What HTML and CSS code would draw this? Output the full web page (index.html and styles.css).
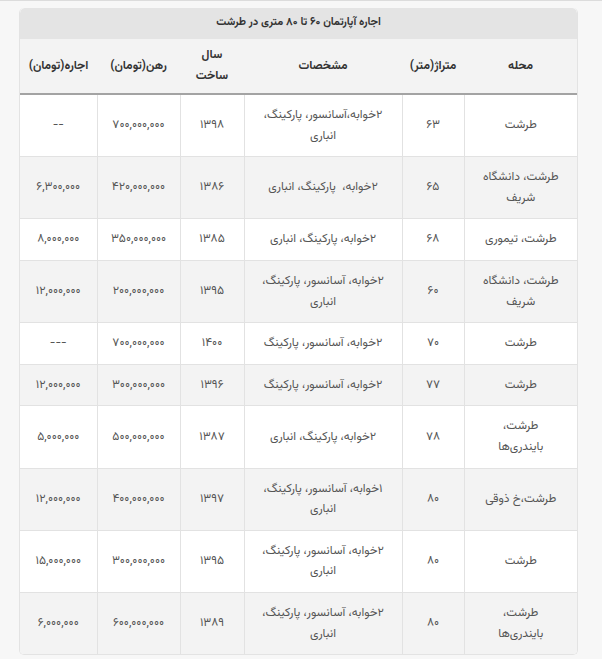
FILE: index.html
```html
<!DOCTYPE html>
<html lang="fa" dir="rtl">
<head>
<meta charset="utf-8">
<title>اجاره آپارتمان</title>
<link rel="stylesheet" href="styles.css">
</head>
<body>
<div class="page">
  <div class="card">
    <div class="caption">اجاره آپارتمان ۶۰ تا ۸۰ متری در طرشت</div>
    <table class="rent">
      <colgroup>
        <col class="c-area">
        <col class="c-size">
        <col class="c-spec">
        <col class="c-year">
        <col class="c-mortgage">
        <col class="c-rent">
      </colgroup>
      <thead>
        <tr>
          <th>محله</th>
          <th>متراژ(متر)</th>
          <th>مشخصات</th>
          <th>سال<br>ساخت</th>
          <th>رهن(تومان)</th>
          <th>اجاره(تومان)</th>
        </tr>
      </thead>
      <tbody>
        <tr>
          <td>طرشت</td><td>۶۳</td><td>۲خوابه،آسانسور، پارکینگ،<br>انباری</td><td>۱۳۹۸</td><td>۷۰۰,۰۰۰,۰۰۰</td><td>--</td>
        </tr>
        <tr>
          <td>طرشت، دانشگاه<br>شریف</td><td>۶۵</td><td>۲خوابه،&nbsp; پارکینگ، انباری</td><td>۱۳۸۶</td><td>۴۲۰,۰۰۰,۰۰۰</td><td>۶,۳۰۰,۰۰۰</td>
        </tr>
        <tr>
          <td>طرشت، تیموری</td><td>۶۸</td><td>۲خوابه، پارکینگ، انباری</td><td>۱۳۸۵</td><td>۳۵۰,۰۰۰,۰۰۰</td><td>۸,۰۰۰,۰۰۰</td>
        </tr>
        <tr>
          <td>طرشت، دانشگاه<br>شریف</td><td>۶۰</td><td>۲خوابه، آسانسور، پارکینگ،<br>انباری</td><td>۱۳۹۵</td><td>۲۰۰,۰۰۰,۰۰۰</td><td>۱۲,۰۰۰,۰۰۰</td>
        </tr>
        <tr>
          <td>طرشت</td><td>۷۰</td><td>۲خوابه، آسانسور، پارکینگ</td><td>۱۴۰۰</td><td>۷۰۰,۰۰۰,۰۰۰</td><td>---</td>
        </tr>
        <tr>
          <td>طرشت</td><td>۷۷</td><td>۲خوابه، آسانسور، پارکینگ</td><td>۱۳۹۶</td><td>۳۰۰,۰۰۰,۰۰۰</td><td>۱۲,۰۰۰,۰۰۰</td>
        </tr>
        <tr>
          <td>طرشت،<br>بایندری‌ها</td><td>۷۸</td><td>۲خوابه، پارکینگ، انباری</td><td>۱۳۸۷</td><td>۵۰۰,۰۰۰,۰۰۰</td><td>۵,۰۰۰,۰۰۰</td>
        </tr>
        <tr>
          <td>طرشت،خ ذوقی</td><td>۸۰</td><td>۱خوابه، آسانسور، پارکینگ،<br>انباری</td><td>۱۳۹۷</td><td>۴۰۰,۰۰۰,۰۰۰</td><td>۱۲,۰۰۰,۰۰۰</td>
        </tr>
        <tr>
          <td>طرشت</td><td>۸۰</td><td>۲خوابه، آسانسور، پارکینگ،<br>انباری</td><td>۱۳۹۵</td><td>۳۰۰,۰۰۰,۰۰۰</td><td>۱۵,۰۰۰,۰۰۰</td>
        </tr>
        <tr>
          <td>طرشت،<br>بایندری‌ها</td><td>۸۰</td><td>۲خوابه، آسانسور، پارکینگ،<br>انباری</td><td>۱۳۸۹</td><td>۶۰۰,۰۰۰,۰۰۰</td><td>۶,۰۰۰,۰۰۰</td>
        </tr>
      </tbody>
    </table>
  </div>
  <div class="edge"></div>
</div>
</body>
</html>
```

FILE: styles.css
```css
html, body {
  margin: 0;
  padding: 0;
}
body {
  background: #f7f7f7;
  border-top: 1px solid #dcdcdc;
  font-family: "Vazirmatn", "DejaVu Sans", "Noto Sans", sans-serif;
  color: #555;
  height: 658px;
  overflow: hidden;
}
.page {
  padding: 7px 24px 0 19px;
  display: flex;
  flex-direction: column;
}
.card {
  width: 559px;
  background: #fff;
  border: 1px solid #e3e3e3;
  border-top: none;
  border-radius: 5px;
  overflow: hidden;
  box-sizing: border-box;
}
.caption {
  background: #e4e4e4;
  color: #333;
  font-size: 11px;
  font-weight: bold;
  text-align: center;
  height: 31px;
  line-height: 30px;
  border-radius: 5px 5px 0 0;
}
.rent {
  width: 100%;
  border-collapse: collapse;
  table-layout: fixed;
  font-size: 12px;
}
.c-area { width: 113px; }
.c-size { width: 62px; }
.c-spec { width: 158px; }
.c-year { width: 64px; }
.c-mortgage { width: 83px; }
.c-rent { width: auto; }
.rent th {
  background: #f3f3f3;
  color: #333;
  font-weight: bold;
  font-size: 12px;
  line-height: 21px;
  padding: 6px 4px;
  border-bottom: 2px solid #a3a3a3;
  text-align: center;
  vertical-align: middle;
}
.rent td {
  text-align: center;
  vertical-align: middle;
  line-height: 20.6px;
  padding: 10px 4px;
  border-left: 1px solid #e2e2e2;
  border-top: 1px solid #e2e2e2;
}
.rent tbody tr:first-child td {
  border-top: none;
}
.rent td:last-child {
  border-left: none;
}
.rent tbody tr:nth-child(even) td {
  background: #f3f3f3;
}
.edge {
  margin: 4px -24px 0 -19px;
  height: 3px;
  background: #2e3235;
}
```
